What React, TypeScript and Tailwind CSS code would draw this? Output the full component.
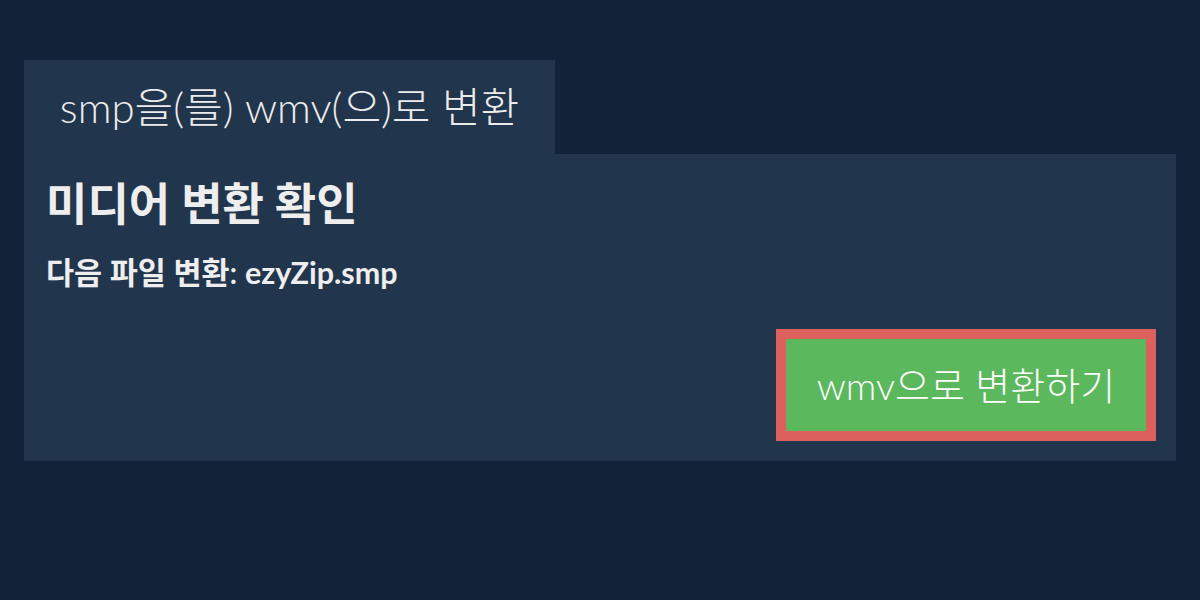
import React from "react";

export default function App() {
  return (
    <div
      className="min-h-screen w-full bg-[#102339] px-[24px] pt-[60px]"
      style={{ fontFamily: "Lato, 'Noto Sans CJK KR', sans-serif" }}
    >
      <div className="flex h-[94px] w-[531px] items-center justify-center bg-[#21354d] text-[42px] font-light text-[#ececec]">
        smp을(를) wmv(으)로 변환
      </div>
      <div className="flex h-[307px] flex-col bg-[#21354d] px-[20px] pb-[20px] pt-[20px]">
        <h2 className="pl-[2px] text-[45px] font-bold leading-[60px] text-[#eeeeee]">
          미디어 변환 확인
        </h2>
        <p className="mt-[18px] pl-[2px] text-[30.5px] font-semibold leading-[40px] text-[#eeeeee]">
          다음 파일 변환: <span className="font-bold">ezyZip.smp</span>
        </p>
        <div className="mt-auto flex justify-end">
          <button className="flex h-[112px] w-[380px] items-center justify-center border-[10px] border-[#dc605c] bg-[#5cb85c] text-[38px] font-light text-white">
            wmv으로 변환하기
          </button>
        </div>
      </div>
    </div>
  );
}
